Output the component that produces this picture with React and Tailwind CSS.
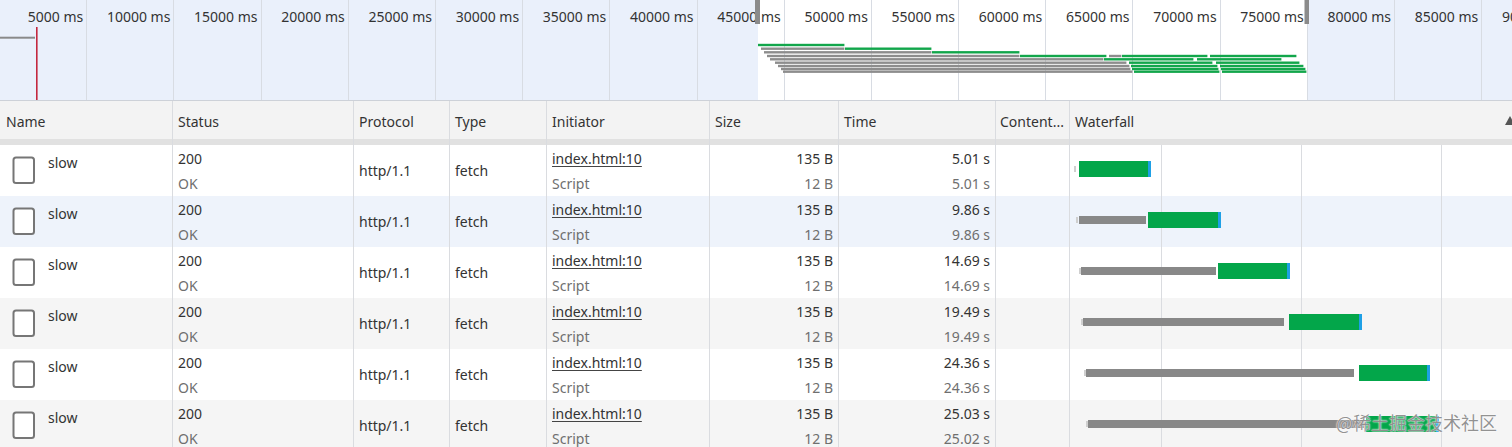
import React from "react";

const labels = Array.from({ length: 18 }, (_, i) => `${(i + 1) * 5000} ms`);

const ov = [
  [45, [["g", 758, 845]]],
  [48.7, [["r", 761, 845], ["g", 845, 932]]],
  [52.3, [["r", 764, 932], ["g", 932, 1020]]],
  [56, [["r", 767, 1020], ["g", 1020, 1107], ["r", 1109, 1122], ["g", 1122, 1208], ["g", 1210, 1297]]],
  [59.3, [["r", 770, 1104], ["g", 1104, 1194], ["g", 1197, 1282]]],
  [62.7, [["r", 775, 1127], ["g", 1129, 1213], ["g", 1216, 1300]]],
  [66, [["r", 778, 1130], ["g", 1131, 1218], ["g", 1220, 1304]]],
  [69, [["r", 781, 1131], ["g", 1132, 1219], ["g", 1221, 1306]]],
  [71.7, [["r", 783, 1133], ["g", 1134, 1220], ["g", 1222, 1307]]],
];

const rows = [
  { t1: "5.01 s", t2: "5.01 s", bg: "bg-white", tick: 1074, gray: null, green: [1079, 1148] },
  { t1: "9.86 s", t2: "9.86 s", bg: "bg-[#eef3fb]", tick: 1076, gray: [1079, 1146], green: [1148, 1218] },
  { t1: "14.69 s", t2: "14.69 s", bg: "bg-white", tick: 1079, gray: [1081, 1216], green: [1218, 1287] },
  { t1: "19.49 s", t2: "19.49 s", bg: "bg-[#f5f5f5]", tick: 1081, gray: [1083, 1284], green: [1289, 1359] },
  { t1: "24.36 s", t2: "24.36 s", bg: "bg-white", tick: 1084, gray: [1086, 1354], green: [1359, 1427] },
  { t1: "25.03 s", t2: "25.02 s", bg: "bg-[#f5f5f5]", tick: 1086, gray: [1088, 1364], green: [1366, 1436] },
];

const cols = "grid grid-cols-[172px_181px_96px_97px_163px_129px_157px_74px_1fr]";
const bl = "border-l border-[#dadce0]";
const W0 = 1070;

function Overview() {
  return (
    <div className="relative h-[101px] border-b border-[#cdd1d8] overflow-hidden bg-white">
      <div className="absolute left-0 top-0 h-full w-[758px] bg-[#eaf0fb]" />
      <div className="absolute left-[1308px] top-0 h-full right-0 bg-[#eaf0fb]" />
      <div className="relative flex h-full">
        {labels.map((l) => (
          <div
            key={l}
            className="shrink-0 w-[87.2px] h-full border-r border-[#d8dce3] text-right pr-[3px] pt-[7px] leading-[20px] text-[14px] text-[#333] whitespace-nowrap"
          >
            {l}
          </div>
        ))}
      </div>
      <svg className="absolute left-0 top-0" width="1512" height="100" viewBox="0 0 1512 100">
        <rect x="0" y="36.7" width="35" height="2" fill="#8a8a8a" />
        <rect x="36" y="27" width="1.6" height="73" fill="#c3283f" />
        {ov.map(([y, segs], i) =>
          segs.map(([c, a, b], j) => (
            <rect
              key={`${i}-${j}`}
              x={a}
              y={y - 1.2}
              width={b - a - 0.6}
              height="2.4"
              fill={c === "g" ? "#12a64b" : "#8d8d8d"}
            />
          ))
        )}
        <rect x="755" y="0" width="5" height="24" fill="#8b8b8b" />
        <rect x="1304.5" y="0" width="4.5" height="24" fill="#8b8b8b" />
      </svg>
    </div>
  );
}

function DocIcon() {
  return (
    <svg width="24" height="29" viewBox="0 0 24 29" className="shrink-0">
      <rect x="1.5" y="1.5" width="20.5" height="25.5" rx="2.5" fill="white" stroke="#767676" strokeWidth="2" />
    </svg>
  );
}

function WaterfallCell({ r }) {
  return (
    <div className={`relative ${bl}`}>
      {[91, 231, 371].map((x) => (
        <div key={x} className="absolute top-0 bottom-0 w-px bg-[#dadce0]" style={{ left: x }} />
      ))}
      <div className="absolute top-[21px] h-[6px] w-[2px] bg-[#cfcfcf]" style={{ left: r.tick - W0 }} />
      {r.gray && (
        <div
          className="absolute top-[20px] h-[8px] bg-[#888888]"
          style={{ left: r.gray[0] - W0, width: r.gray[1] - r.gray[0] }}
        />
      )}
      <div
        className="absolute top-[16px] h-[16px] bg-[#03a64a]"
        style={{ left: r.green[0] - W0, width: r.green[1] - r.green[0] }}
      />
      <div className="absolute top-[16px] h-[16px] w-[3px] bg-[#1ea0e6]" style={{ left: r.green[1] - W0 }} />
    </div>
  );
}

export default function App() {
  return (
    <div className="relative w-[1512px] h-[447px] overflow-hidden bg-white font-['Noto_Sans',_'Open_Sans',_sans-serif] text-[14px] text-[#333]">
      <Overview />
      <div className={`${cols} h-[38px] bg-[#f3f3f3] leading-[20px]`}>
        <div className="flex items-center pt-[3px] pl-[6px]">Name</div>
        <div className={`flex items-center pt-[3px] pl-[5px] ${bl}`}>Status</div>
        <div className={`flex items-center pt-[3px] pl-[5px] ${bl}`}>Protocol</div>
        <div className={`flex items-center pt-[3px] pl-[5px] ${bl}`}>Type</div>
        <div className={`flex items-center pt-[3px] pl-[5px] ${bl}`}>Initiator</div>
        <div className={`flex items-center pt-[3px] pl-[5px] ${bl}`}>Size</div>
        <div className={`flex items-center pt-[3px] pl-[5px] ${bl}`}>Time</div>
        <div className={`flex items-center pt-[3px] pl-[4px] ${bl} whitespace-nowrap overflow-hidden`}>Content...</div>
        <div className={`relative flex items-center pt-[3px] pl-[5px] ${bl}`}>
          Waterfall
          <svg className="absolute right-[-3px] top-[15px]" width="10" height="9" viewBox="0 0 10 9">
            <path d="M5 0 L10 9 L0 9 Z" fill="#555" />
          </svg>
        </div>
      </div>
      <div className={`${cols} h-[6px] bg-[#e1e1e1]`}>
        <div />
        <div className={bl} />
        <div className={bl} />
        <div className={bl} />
        <div className={bl} />
        <div className={bl} />
        <div className={bl} />
        <div className={bl} />
        <div className={bl} />
      </div>
      {rows.map((r, i) => (
        <div key={i} className={`${cols} h-[51px] ${r.bg}`}>
          <div className="flex items-center pl-[12px]">
            <DocIcon />
            <div className="self-start pt-[8px] pl-[12px] leading-[20px]">slow</div>
          </div>
          <div className={`flex flex-col justify-center pl-[5px] leading-[25px] ${bl}`}>
            <div>200</div>
            <div className="text-[#6f6f6f]">OK</div>
          </div>
          <div className={`flex items-center pl-[5px] ${bl}`}>http/1.1</div>
          <div className={`flex items-center pl-[5px] ${bl}`}>fetch</div>
          <div className={`flex flex-col justify-center pl-[5px] leading-[25px] ${bl}`}>
            <div className="underline underline-offset-2 decoration-[#444]">index.html:10</div>
            <div className="text-[#6f6f6f]">Script</div>
          </div>
          <div className={`flex flex-col justify-center items-end pr-[5px] leading-[25px] ${bl}`}>
            <div>135 B</div>
            <div className="text-[#6f6f6f]">12 B</div>
          </div>
          <div className={`flex flex-col justify-center items-end pr-[5px] leading-[25px] ${bl}`}>
            <div>{r.t1}</div>
            <div className="text-[#6f6f6f]">{r.t2}</div>
          </div>
          <div className={bl} />
          <WaterfallCell r={r} />
        </div>
      ))}
      <div className="absolute left-[1336px] top-[409px] text-[18px] leading-[26px] whitespace-nowrap text-[rgba(110,110,110,0.75)] [text-shadow:0_0_2px_white,0_0_1px_white] font-['Noto_Sans_CJK_SC',_sans-serif]">
        @稀土掘金技术社区
      </div>
    </div>
  );
}
